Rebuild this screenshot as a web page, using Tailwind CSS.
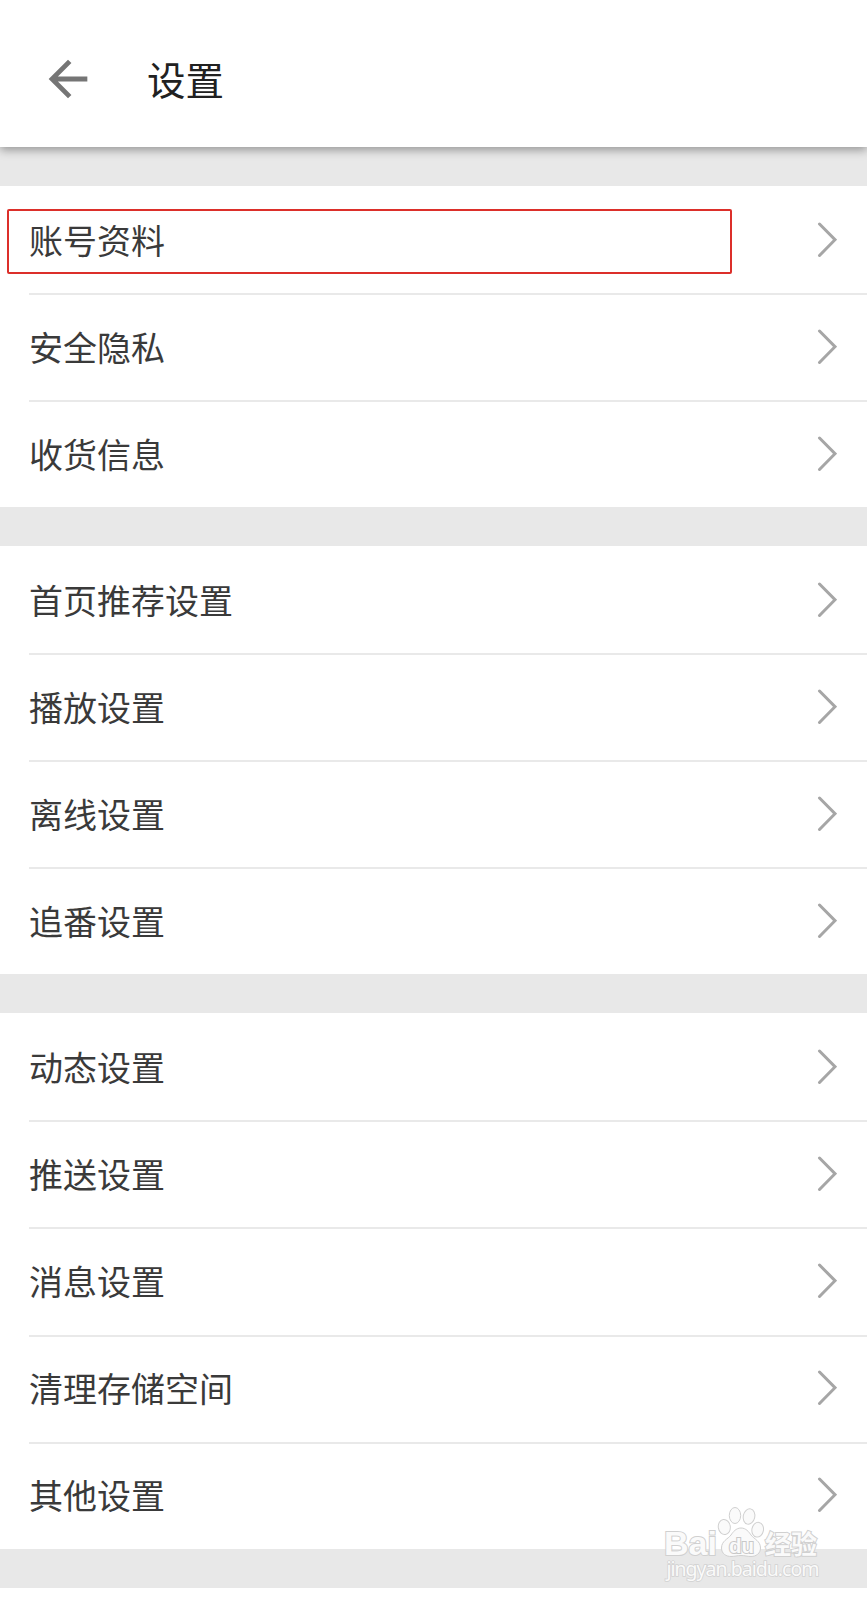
<!DOCTYPE html>
<html lang="zh-CN">
<head>
    <meta charset="UTF-8">
    <meta name="viewport" content="width=device-width, initial-scale=1.0">
    <title>设置</title>
    <script src="https://cdn.jsdelivr.net/npm/@tailwindcss/browser@4"></script>
    <style>
        body {
            font-family: 'Noto Sans CJK SC', sans-serif;
        }
    </style>
</head>
<body class="bg-white text-[#3a3a3a] h-[1600px] overflow-hidden">

    <!-- Chevron shared by all rows -->
    <svg class="hidden">
        <symbol id="chevron" viewBox="0 0 20 36">
            <path d="M2.500 2l15.500 15.700L2.500 33.500" fill="none" stroke="#a6a6a6" stroke-width="3" stroke-linecap="round" stroke-linejoin="miter"/>
        </symbol>
    </svg>

    <div class="relative w-[867px] h-[1588px] bg-[#e8e8e8] flex flex-col gap-[39px]">

        <!-- Header -->
        <header class="relative h-[147px] shrink-0 bg-white flex items-center pt-[10px] pl-[39px] shadow-[0_3px_9px_rgba(0,0,0,0.36)]">
            <svg class="w-[58px] h-[58px] text-[#757575]" viewBox="0 0 24 24" fill="currentColor">
                <path d="M20 11H7.83l5.59-5.59L12 4l-8 8 8 8 1.41-1.41L7.83 13H20v-2z"/>
            </svg>
            <h1 class="ml-[50px] text-[38.5px] leading-none text-[#212121]">设置</h1>
        </header>

        <!-- Account -->
        <ul class="relative bg-white h-[321px] shrink-0 text-[34px] leading-none">
            <li class="h-[107px] pl-[29px]"><a class="h-full flex items-center justify-between pr-[30px]">账号资料<svg class="w-5 h-9"><use href="#chevron"/></svg></a></li>
            <li class="h-[107px] pl-[29px]"><a class="h-full flex items-center justify-between pr-[30px] border-t-2 pb-0.5 border-[#e9e9e9]">安全隐私<svg class="w-5 h-9"><use href="#chevron"/></svg></a></li>
            <li class="h-[107px] pl-[29px]"><a class="h-full flex items-center justify-between pr-[30px] border-t-2 pb-0.5 border-[#e9e9e9]">收货信息<svg class="w-5 h-9"><use href="#chevron"/></svg></a></li>
            <!-- Highlight around the first row -->
            <div class="absolute left-[7px] top-[23px] w-[725px] h-[65px] border-2 border-[#dc2f2a] rounded-[2px]"></div>
        </ul>

        <!-- Playback -->
        <ul class="bg-white h-[428px] shrink-0 text-[34px] leading-none">
            <li class="h-[107px] pl-[29px]"><a class="h-full flex items-center justify-between pr-[30px]">首页推荐设置<svg class="w-5 h-9"><use href="#chevron"/></svg></a></li>
            <li class="h-[107px] pl-[29px]"><a class="h-full flex items-center justify-between pr-[30px] border-t-2 pb-0.5 border-[#e9e9e9]">播放设置<svg class="w-5 h-9"><use href="#chevron"/></svg></a></li>
            <li class="h-[107px] pl-[29px]"><a class="h-full flex items-center justify-between pr-[30px] border-t-2 pb-0.5 border-[#e9e9e9]">离线设置<svg class="w-5 h-9"><use href="#chevron"/></svg></a></li>
            <li class="h-[107px] pl-[29px]"><a class="h-full flex items-center justify-between pr-[30px] border-t-2 pb-0.5 border-[#e9e9e9]">追番设置<svg class="w-5 h-9"><use href="#chevron"/></svg></a></li>
        </ul>

        <!-- Messages and storage -->
        <ul class="bg-white h-[536px] shrink-0 text-[34px] leading-none">
            <li class="h-[107.2px] pl-[29px]"><a class="h-full flex items-center justify-between pr-[30px]">动态设置<svg class="w-5 h-9"><use href="#chevron"/></svg></a></li>
            <li class="h-[107.2px] pl-[29px]"><a class="h-full flex items-center justify-between pr-[30px] border-t-2 pb-0.5 border-[#e9e9e9]">推送设置<svg class="w-5 h-9"><use href="#chevron"/></svg></a></li>
            <li class="h-[107.2px] pl-[29px]"><a class="h-full flex items-center justify-between pr-[30px] border-t-2 pb-0.5 border-[#e9e9e9]">消息设置<svg class="w-5 h-9"><use href="#chevron"/></svg></a></li>
            <li class="h-[107.2px] pl-[29px]"><a class="h-full flex items-center justify-between pr-[30px] border-t-2 pb-0.5 border-[#e9e9e9]">清理存储空间<svg class="w-5 h-9"><use href="#chevron"/></svg></a></li>
            <li class="h-[107.2px] pl-[29px]"><a class="h-full flex items-center justify-between pr-[30px] border-t-2 pb-0.5 border-[#e9e9e9]">其他设置<svg class="w-5 h-9"><use href="#chevron"/></svg></a></li>
        </ul>

        <!-- Watermark -->
        <svg class="absolute left-[660px] top-[1500px] w-[170px] h-[88px]" viewBox="0 0 170 88" fill="#fafafa" stroke="#d0d0d0" stroke-width="1">
            <ellipse cx="64.3" cy="27" rx="6" ry="7.6" transform="rotate(-8 64.3 27)"/>
            <ellipse cx="75" cy="15.5" rx="5.7" ry="8"/>
            <ellipse cx="89" cy="16.5" rx="5.8" ry="7.8" transform="rotate(12 89 16.5)"/>
            <ellipse cx="97.7" cy="29.7" rx="5.8" ry="7.4" transform="rotate(10 97.7 29.7)"/>
            <path d="M81 28c-5 0-8 4-10 7-3 4-9.500 6-9.500 13 0 6 5 8.500 9.500 8.500 4 0 6-1 10-1s6 1 10 1c5 0 9.500-3 9.500-8.500 0-7-6.500-9-9.500-13-2-3-5-7-10-7z"/>
            <g font-family="Liberation Sans, sans-serif" font-weight="bold" paint-order="stroke" stroke-width="2">
                <text x="4" y="55" font-size="34" textLength="53" lengthAdjust="spacingAndGlyphs">Bai</text>
                <text x="69" y="53" font-size="20" textLength="25" lengthAdjust="spacingAndGlyphs" stroke="#c8c8c8">du</text>
            </g>
            <text x="105" y="54" font-size="26" font-weight="bold" font-family="Noto Sans CJK SC, sans-serif" paint-order="stroke" stroke-width="2">经验</text>
            <text x="6.500" y="76" font-size="19.5" textLength="153" font-family="Noto Sans, sans-serif" paint-order="stroke" stroke="#d2d2d2" stroke-width="1.600">jingyan.baidu.com</text>
        </svg>

    </div>

</body>
</html>
